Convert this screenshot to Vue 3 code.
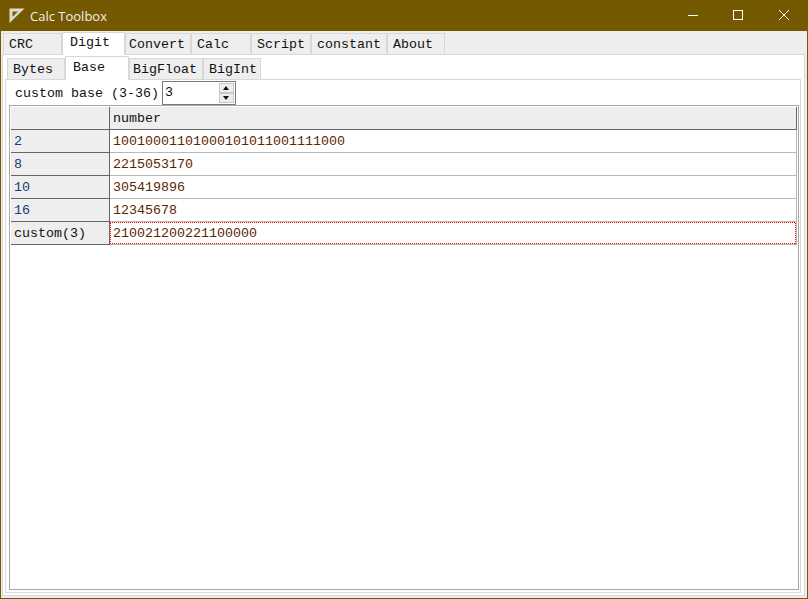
<script setup>
const mainTabs = [
  { label: 'CRC', w: 59, pad: 5 },
  { label: 'Digit', w: 63, pad: 7, active: true },
  { label: 'Convert', w: 66, pad: 3 },
  { label: 'Calc', w: 60, pad: 5 },
  { label: 'Script', w: 60, pad: 5 },
  { label: 'constant', w: 76, pad: 5 },
  { label: 'About', w: 58, pad: 5 },
]
const subTabs = [
  { label: 'Bytes', w: 58, pad: 5 },
  { label: 'Base', w: 64, pad: 7, active: true },
  { label: 'BigFloat', w: 74, pad: 3 },
  { label: 'BigInt', w: 58, pad: 5 },
]
const rows = [
  { head: '2', value: '10010001101000101011001111000', blue: true },
  { head: '8', value: '2215053170', blue: true },
  { head: '10', value: '305419896', blue: true },
  { head: '16', value: '12345678', blue: true },
  { head: 'custom(3)', value: '210021200221100000', focus: true },
]
</script>

<template>
  <div class="window">
    <header class="titlebar">
      <svg class="logo" width="16" height="16" viewBox="0 0 16 16">
        <path d="M0.500 0.500H15.500L0.500 15Z" fill="#dedcd2" />
        <path d="M3.500 3.500H9L3.500 9Z" fill="#75590a" />
      </svg>
      <span class="title">Calc Toolbox</span>
      <div class="controls">
        <svg width="46" height="30" viewBox="0 0 46 30"><path d="M19 15.500H29" stroke="#fff" fill="none" /></svg>
        <svg width="46" height="30" viewBox="0 0 46 30"><rect x="18.500" y="10.500" width="9" height="9" stroke="#fff" fill="none" /></svg>
        <svg width="46" height="30" viewBox="0 0 46 30"><path d="M18 10L28 20M28 10L18 20" stroke="#fff" fill="none" /></svg>
      </div>
    </header>
    <div class="body">
      <div class="tabs main-tabs">
        <div v-for="t in mainTabs" :key="t.label" class="tab" :class="{ active: t.active }" :style="{ width: t.w + 'px', paddingLeft: t.pad + 'px' }">{{ t.label }}</div>
      </div>
      <div class="pane outer">
        <div class="tabs sub-tabs">
          <div v-for="t in subTabs" :key="t.label" class="tab" :class="{ active: t.active }" :style="{ width: t.w + 'px', paddingLeft: t.pad + 'px' }">{{ t.label }}</div>
        </div>
        <div class="pane inner">
          <div class="form">
            <span>custom base (3-36)</span>
            <div class="spin">
              <span class="spin-value">3</span>
              <div class="spin-btns">
                <div class="arrow up"></div>
                <div class="arrow down"></div>
              </div>
            </div>
          </div>
          <div class="table">
            <div class="row header">
              <div class="head corner"></div>
              <div class="cell hcell">number</div>
            </div>
            <div v-for="r in rows" :key="r.head" class="row" :class="{ focus: r.focus }">
              <div class="head" :class="{ blue: r.blue }">{{ r.head }}</div>
              <div class="cell value">{{ r.value }}</div>
            </div>
          </div>
        </div>
      </div>
    </div>
  </div>
</template>

<style>
html, body { margin: 0; padding: 0; overflow: hidden; }
</style>

<style scoped>
.window {
  width: 808px;
  height: 599px;
  box-sizing: border-box;
  background: #755900;
  padding: 0 1px 1px;
  display: flex;
  flex-direction: column;
  font-family: "Liberation Mono", "Courier New", monospace;
  font-size: 13.33px;
  color: #111;
}
.titlebar {
  height: 31px;
  flex: none;
  display: flex;
  align-items: center;
  color: #f0f0f0;
  padding-left: 8px;
  font-family: "Open Sans", sans-serif;
  font-size: 13px;
}
.logo { margin-right: 5px; }
.controls { margin-left: auto; display: flex; align-self: flex-start; }
.controls svg { display: block; }
.body {
  flex: 1;
  min-height: 0;
  background: #eeeeee;
  padding: 1px 2px 2px 1px;
  display: flex;
  flex-direction: column;
}
.tabs { display: flex; flex: none; align-items: flex-end; }
.main-tabs { height: 22px; margin-left: 1px; }
.sub-tabs { height: 23px; margin-left: 2px; }
.tab {
  box-sizing: border-box;
  height: 21px;
  background: #eeeeee;
  border: 1px solid #d8d8d8;
  border-bottom: 0;
  line-height: 22px;
  white-space: nowrap;
}
.tab.active {
  background: #fff;
  position: relative;
  margin-bottom: -1px;
  z-index: 1;
}
.main-tabs .tab.active { height: 23px; line-height: 20px; }
.sub-tabs .tab.active { height: 24px; line-height: 22px; }
.pane {
  box-sizing: border-box;
  border: 1px solid #d8d8d8;
  background: #fff;
  flex: 1;
  min-height: 0;
  display: flex;
  flex-direction: column;
}
.outer { padding: 1px 3px 2px 2px; }
.inner { padding: 1px 1px 2px 3px; }
.form {
  height: 24px;
  display: flex;
  align-items: center;
  gap: 3px;
  padding-left: 6px;
  flex: none;
}
.spin {
  box-sizing: border-box;
  width: 74px;
  height: 24px;
  border: 1px solid #7a7a7a;
  display: flex;
  align-items: center;
  justify-content: space-between;
  padding: 1px 1px 1px 2px;
}
.spin-value { line-height: 20px; margin-top: -1px; }
.spin-btns {
  width: 15px;
  height: 20px;
  display: flex;
  flex-direction: column;
}
.arrow {
  box-sizing: border-box;
  flex: 1;
  background: #eeeeee;
  border: 1px solid #c8c8c8;
  position: relative;
}
.arrow::after {
  content: "";
  position: absolute;
  left: 3px;
  border-left: 3.500px solid transparent;
  border-right: 3.500px solid transparent;
}
.arrow.up::after { top: 2px; border-bottom: 4px solid #111; }
.arrow.down::after { top: 2px; border-top: 4px solid #111; }
.table {
  box-sizing: border-box;
  flex: 1;
  min-height: 0;
  border: 1px solid #a8a8a8;
  padding: 1px;
}
.row {
  display: flex;
  height: 23px;
  box-sizing: border-box;
  line-height: 24px;
}
.head {
  box-sizing: border-box;
  width: 99px;
  flex: none;
  background: #eeeeee;
  border-right: 1px solid #666;
  border-bottom: 1px solid #666;
  padding-left: 3px;
}
.head.blue { color: #123e70; }
.cell {
  box-sizing: border-box;
  flex: 1;
  padding-left: 3px;
  border-right: 1px solid #b8b8b8;
  border-bottom: 1px solid #b8b8b8;
}
.hcell {
  background: #eeeeee;
  border-right: 1px solid #666;
  border-bottom: 1px solid #666;
}
.value { color: #5a2600; }
.focus .cell { position: relative; }
.focus .cell::after {
  content: "";
  position: absolute;
  inset: 0;
  background:
    repeating-linear-gradient(90deg, #ff0000 0 1px, transparent 1px 2px) left top / 100% 1px no-repeat,
    repeating-linear-gradient(90deg, #ff0000 0 1px, transparent 1px 2px) left bottom / 100% 1px no-repeat,
    repeating-linear-gradient(0deg, #ff0000 0 1px, transparent 1px 2px) left top / 1px 100% no-repeat,
    repeating-linear-gradient(0deg, #ff0000 0 1px, transparent 1px 2px) right top / 1px 100% no-repeat;
}
</style>
